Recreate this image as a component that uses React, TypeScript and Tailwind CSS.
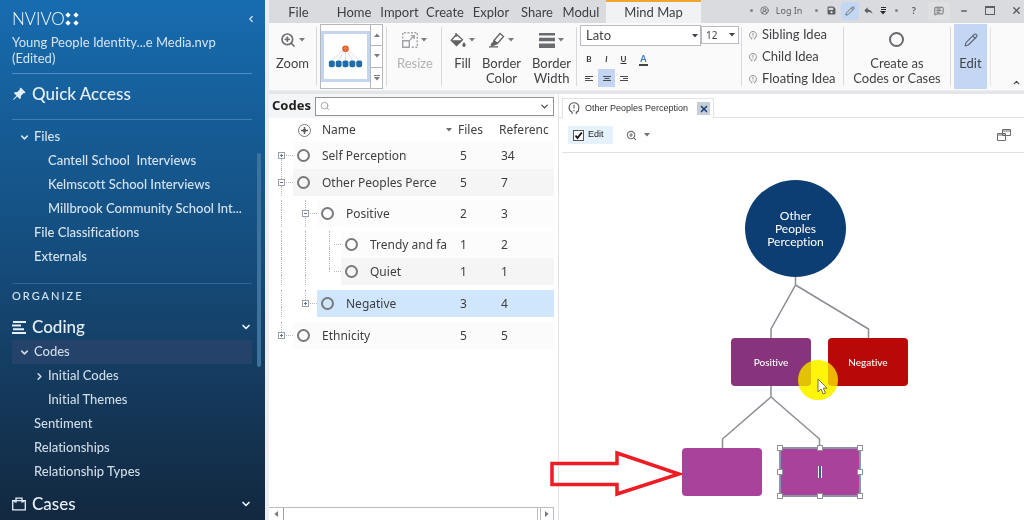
import React from "react";
import { ChevronDown, ChevronLeft, ChevronRight, ChevronUp, CircleUserRound, MessageSquareText, Minus, Pencil, X, ZoomIn, Search } from "lucide-react";
import { BsFillPinAngleFill } from "react-icons/bs";
import { FaSave } from "react-icons/fa";
import { MdReply } from "react-icons/md";

function Caret({ className = "" }: { className?: string }) {
  return (
    <svg viewBox="0 0 6 4" className={`h-[4px] w-[6px] shrink-0 fill-current ${className}`} aria-hidden="true">
      <path d="M0 0h6L3 3.6z" />
    </svg>
  );
}

/* ---------- Sidebar ---------- */

function NavRow({ label, level = 0, arrow, active }: { label: string; level?: number; arrow?: "down" | "right"; active?: boolean }) {
  return (
    <li className={`flex h-6 items-center whitespace-pre ${level ? "pl-[22px]" : "pl-[7px]"} ${active ? "bg-[#24426a]" : ""}`}>
      <a href="#" className="flex items-center">
        <span className={`flex justify-start ${level ? "w-[14px]" : "w-[15px]"}`}>
          {arrow === "down" && <ChevronDown size={11} strokeWidth={3.5} />}
          {arrow === "right" && <ChevronRight size={11} strokeWidth={3.5} />}
        </span>
        {label}
      </a>
    </li>
  );
}

function Sidebar() {
  return (
    <aside className="relative flex w-[265px] shrink-0 flex-col bg-linear-to-b from-[#176cb0] via-[#144c7b] to-[#12283f] pr-[13px] pl-3 font-['Lato',sans-serif] text-[13px] text-[#d5e3f0]">
      <header className="flex h-[74px] flex-col border-b border-[#4b8ec5] pt-[11px]">
        <div className="flex h-4 items-center justify-between">
          <span className="flex items-center">
            <span className="text-[17px] leading-4 font-light text-white">NVIVO</span>
            <svg viewBox="0 0 14 14" className="h-[14px] w-[14px] fill-white" aria-hidden="true">
              <path d="M3 0l1 2 2 1-2 1-1 2-1-2-2-1 2-1zM11 0l1 2 2 1-2 1-1 2-1-2-2-1 2-1zM3 8l1 2 2 1-2 1-1 2-1-2-2-1 2-1zM11 8l1 2 2 1-2 1-1 2-1-2-2-1 2-1z" />
              <path d="M1.500 1.500h3v3h-3zM9.500 1.500h3v3h-3zM1.500 9.500h3v3h-3zM9.500 9.500h3v3h-3z" />
            </svg>
          </span>
          <button aria-label="Collapse navigation" className="-mr-1"><ChevronLeft size={10} strokeWidth={3} /></button>
        </div>
        <p className="mt-[7px] leading-4">Young People Identity...e Media.nvp<br />(Edited)</p>
      </header>
      <h2 className="flex h-[46px] items-center gap-1.5 border-b border-[#3f7eb1] pb-1.5 text-[17px] font-medium text-[#e6eff7]">
        <BsFillPinAngleFill size={14} />Quick Access
      </h2>
      <ul className="mt-[5px] pb-[14px] font-medium [font-variant-ligatures:none]">
        <NavRow label="Files" arrow="down" />
        <NavRow label="Cantell School  Interviews" level={1} />
        <NavRow label="Kelmscott School Interviews" level={1} />
        <NavRow label="Millbrook Community School Int..." level={1} />
        <NavRow label="File Classifications" />
        <NavRow label="Externals" />
      </ul>
      <h3 className="border-t border-[#2c6597] pt-[5px] text-[11px] leading-[14px] font-medium tracking-[0.18em]">ORGANIZE</h3>
      <h2 className="mt-3 flex h-6 items-center justify-between pr-px text-[17px] font-medium text-[#e6eff7]">
        <span className="flex items-center gap-1.5">
          <svg viewBox="0 0 14 14" className="h-[14px] w-[14px] fill-current" aria-hidden="true">
            <path d="M1 1h13v2H1zM0 4.6h9v2H0zM1 8.2h11v2H1zM0 12h14v2H0z" />
          </svg>
          Coding
        </span>
        <ChevronDown size={12} strokeWidth={3.500} className="-mr-px" />
      </h2>
      <ul className="mt-px font-medium text-[#cfdbe6] [font-variant-ligatures:none]">
        <NavRow label="Codes" arrow="down" active />
        <NavRow label="Initial Codes" level={1} arrow="right" />
        <NavRow label="Initial Themes" level={1} />
        <NavRow label="Sentiment" />
        <NavRow label="Relationships" />
        <NavRow label="Relationship Types" />
      </ul>
      <h2 className="mt-2 flex h-6 items-center justify-between pr-px text-[17px] font-medium text-[#e6eff7]">
        <span className="flex items-center gap-1.5">
          <svg viewBox="0 0 14 14" className="h-[14px] w-[14px] fill-none stroke-current" strokeWidth="1.3" aria-hidden="true">
            <path d="M.7 3.7h12.6v9.2H.7zM4 5.8V1.2h6v4.6M2.500 3.7v1.6M11.500 3.7v1.6" />
          </svg>
          Cases
        </span>
        <ChevronDown size={12} strokeWidth={3.500} className="-mr-px" />
      </h2>
      <span className="absolute top-[153px] right-1 h-[214px] w-1 rounded bg-[#3d729d]" />
    </aside>
  );
}

/* ---------- Window and ribbon ---------- */

const tabs = [
  { label: "File", width: "w-[59px]" },
  { label: "Home", width: "ml-[3px] w-[46px]" },
  { label: "Import", width: "w-[45px]" },
  { label: "Create", width: "w-[46px]" },
  { label: "Explor", width: "w-[46px]" },
  { label: "Share", width: "w-[46px]" },
  { label: "Modul", width: "w-[42px]" },
];

function Dot() {
  return <span className="block h-[3px] w-[3px] shrink-0 rounded-full bg-[#808489]" />;
}

function TabBar() {
  return (
    <nav className="flex h-[23px] shrink-0 items-stretch bg-[#d9dbde] font-['Lato',sans-serif] text-[13px] text-[#3c3f42]">
      {tabs.map((t) => (
        <button key={t.label} className={`pt-0.5 ${t.width}`}>{t.label}</button>
      ))}
      <button className="ml-[4px] w-[95px] border-t-2 border-[#efa62e] bg-[#f1f2f4]">Mind Map</button>
      <div className="flex flex-1 items-center justify-end pb-0.5 text-[10px] text-[#5b5e62]">
        <Dot />
        <button className="ml-[7px] flex items-center gap-[7px] font-['Noto_Sans',sans-serif] text-[9px]">
          <CircleUserRound size={9} />Log In
        </button>
        <span className="ml-[13px]"><Dot /></span>
        <button aria-label="Save" className="ml-[9px]"><FaSave size={9} /></button>
        <button aria-label="Edit mode" className="ml-[5px] flex h-[18px] w-[18px] items-center justify-center rounded-sm bg-[#c3d7f3]"><Pencil size={10} /></button>
        <button aria-label="Undo" className="ml-[4px]"><MdReply size={11} /></button>
        <button aria-label="Customize" className="ml-[6px] flex w-[6px] flex-col items-center gap-px text-[#2a2a2a]">
          <span className="h-px w-[5px] bg-current" /><span className="h-px w-[5px] bg-current" /><Caret />
        </button>
        <span className="ml-[9px]"><Dot /></span>
        <button aria-label="Help" className="ml-[13px] font-bold">?</button>
        <button aria-label="Feedback" className="ml-[12px] flex h-[18px] w-[22px] items-center justify-center rounded-sm bg-[#dfe0e2]"><MessageSquareText size={10} /></button>
        <button aria-label="Minimize" className="ml-[10px]"><Minus size={8} strokeWidth={4} /></button>
        <button aria-label="Maximize" className="ml-[17px] h-[9px] w-[10px] border border-t-2 border-[#5b5e62]" />
        <button aria-label="Close" className="mr-0.5 ml-[16px]"><X size={11} strokeWidth={3} /></button>
      </div>
    </nav>
  );
}

function Group({ width, children, last }: { width: string; children: React.ReactNode; last?: boolean }) {
  return (
    <div className={`flex shrink-0 ${width}`}>
      <div className="flex min-w-0 flex-1 justify-center">{children}</div>
      <span className={`my-1 w-px ${last ? "bg-[#e2e4e8]" : "bg-[#d6d9de]"}`} />
    </div>
  );
}

function BigButton({ icon, lines, caret = true, className = "" }: { icon: React.ReactNode; lines: string[]; caret?: boolean; className?: string }) {
  return (
    <button className={`flex flex-col items-center ${className}`}>
      <span className="flex h-[33px] items-center gap-[3px]">{icon}{caret && <Caret className="text-[#77797c]" />}</span>
      {lines.map((l) => (<span key={l} className="leading-[15px]">{l}</span>))}
    </button>
  );
}

function HeadIcon() {
  return (
    <svg viewBox="0 0 12 14" className="h-[9px] w-2 fill-none stroke-[#77797c]" strokeWidth="1.3" aria-hidden="true">
      <path d="M4 13v-2C1.500 10 .7 8 .7 6 .7 3 3 .8 6 .8S11.300 3 11.300 5.500L10.500 10 8.500 11v2M6 3v4M6 8.500V10" />
    </svg>
  );
}

function AlignIcon({ kind }: { kind: "left" | "center" | "right" }) {
  const d = { left: "M0 .5h8M0 2.500h5M0 4.500h8", center: "M0 .5h8M1.500 2.500h5M0 4.500h8", right: "M0 .5h8M3 2.500h5M0 4.500h8" }[kind];
  return <svg viewBox="0 0 8 5" className="h-[5px] w-2 fill-none stroke-current" strokeWidth="1" aria-hidden="true"><path d={d} /></svg>;
}

function Ribbon() {
  return (
    <section className="flex h-[68px] shrink-0 items-stretch border-b border-[#eceef0] bg-[#fafafb] font-['Lato',sans-serif] text-[13px] text-[#404245]">
      <Group width="w-12">
        <BigButton lines={["Zoom"]} icon={<ZoomIn size={16} strokeWidth={2.500} className="text-[#6d6f72]" />} />
      </Group>
      <Group width="w-[70px]">
        <div className="my-px flex w-[63px] border border-[#b5b7ba] bg-white">
          <button aria-label="Mind map style" className="my-[6px] flex-1 border-[3px] border-[#c4d5f0]">
            <svg viewBox="0 0 44 44" className="h-full w-full" aria-hidden="true">
              <path d="M22 13L8 26M22 13l-7 13M22 13v13M22 13l7 13M22 13l14 13" stroke="#dcdee0" fill="none" />
              <circle cx="22" cy="14" r="2.600" fill="#f6b04b" stroke="#e8582b" strokeWidth="1.500" />
              <path d="M20.500 12.500l3 3m0-3l-3 3" stroke="#d9482b" />
              <g fill="#1f6ca8">
                <rect x="5" y="26" width="6" height="7" rx="2" /><rect x="12" y="26" width="6" height="7" rx="2" /><rect x="19" y="26" width="6" height="7" rx="2" /><rect x="26" y="26" width="6" height="7" rx="2" /><rect x="33" y="26" width="6" height="7" rx="2" />
              </g>
            </svg>
          </button>
          <div className="flex w-3 flex-col divide-y divide-[#b5b7ba] border-l border-[#b5b7ba] text-[#77797c]">
            <button aria-label="Previous style" className="flex flex-1 items-center justify-center"><Caret className="rotate-180" /></button>
            <button aria-label="Next style" className="flex flex-1 items-center justify-center"><Caret /></button>
            <button aria-label="More styles" className="flex flex-1 flex-col items-center justify-center gap-px"><span className="h-px w-[6px] bg-current" /><Caret /></button>
          </div>
        </div>
      </Group>
      <Group width="w-[55px]">
        <BigButton
          lines={["Resize"]}
          className="pl-0.5 text-[#b0b2b5]"
          icon={
            <svg viewBox="0 0 16 16" className="h-4 w-4 fill-none stroke-[#a0a2a5]" aria-hidden="true">
              <path d="M.7 8.700h6.600v6.600H.7z" strokeWidth="1.400" />
              <path d="M.7 6.500V.7h14.600v14.600H9.500" strokeWidth="1.400" strokeDasharray="2 1.500" />
              <path d="M8 8l4-4M9 3.700h3.300V7" strokeWidth="1.300" />
            </svg>
          }
        />
      </Group>
      <Group width="w-[135px]">
        <div className="flex flex-1 gap-[11px] pl-2">
          <BigButton
            lines={["Fill"]}
            icon={
              <svg viewBox="0 0 16 16" className="h-4 w-4 fill-[#606265]" aria-hidden="true">
                <path d="M6 1v4" stroke="#606265" strokeWidth="1.400" />
                <path d="M6.500 2.500L1.200 8.300l5.300 5.300 6-5.800z" fill="none" stroke="#606265" strokeWidth="1.300" />
                <path d="M1.200 8.300h11l-5.700 5.300zM14 10c1 1.500 1.700 2.400 1.700 3.300a1.700 1.700 0 01-3.400 0c0-.9.700-1.800 1.700-3.300z" />
              </svg>
            }
          />
          <BigButton
            lines={["Border", "Color"]}
            className="-ml-1"
            icon={
              <svg viewBox="0 0 16 16" className="h-4 w-4 fill-none stroke-[#606265]" strokeWidth="1.300" aria-hidden="true">
                <path d="M5 8.500L11 1.500l3.500 3-6 7-3.800.8zM5 8.500l3.500 3M3.500 10.500L2 13.500M0 14.800h9" />
                <path d="M5 9l3 2.500L3 14z" fill="#606265" />
              </svg>
            }
          />
          <BigButton
            lines={["Border", "Width"]}
            icon={
              <svg viewBox="0 0 16 16" className="h-4 w-4 fill-[#6a6c6f]" aria-hidden="true">
                <path d="M0 1h16v2.500H0zM0 5.700h16v3.500H0zM0 11.500h16v4.500H0z" />
              </svg>
            }
          />
        </div>
      </Group>
      <Group width="w-[165px]">
        <div className="flex flex-1 flex-col pt-0.5 pl-[3px]">
          <div className="flex items-start">
            <div className="flex h-[21px] w-[121px] items-center border border-[#b9bbbe] bg-white pr-[2px]">
              <select aria-label="Font" className="h-full min-w-0 flex-1 appearance-none bg-transparent pl-[5px] outline-none"><option>Lato</option></select>
              <Caret className="w-[5px]" />
            </div>
            <div className="mt-px flex h-[18px] w-[38px] items-center border border-[#b9bbbe] bg-white pr-[3px] font-['Noto_Sans',sans-serif] text-[10px]">
              <select aria-label="Font size" className="h-full min-w-0 flex-1 appearance-none bg-transparent pl-1 outline-none"><option>12</option></select>
              <Caret className="w-[5px]" />
            </div>
          </div>
          <div className="mt-1 flex h-[18px] items-center text-[8px] font-bold text-[#333]">
            <button className="w-[18px]">B</button>
            <button className="w-[17px] italic">I</button>
            <button className="w-[17px] underline">U</button>
            <button aria-label="Font color" className="ml-[3px] w-[17px]"><span className="border-b-2 border-[#444] px-px text-[9px] leading-2 text-[#3976bd]">A</span></button>
          </div>
          <div className="mt-px flex h-[18px] items-stretch text-[#4a4c4f]">
            <button aria-label="Align left" className="flex w-[18px] items-center justify-center"><AlignIcon kind="left" /></button>
            <button aria-label="Align center" className="flex w-[17px] items-center justify-center bg-[#c3d5f2]"><AlignIcon kind="center" /></button>
            <button aria-label="Align right" className="flex w-[17px] items-center justify-center"><AlignIcon kind="right" /></button>
          </div>
        </div>
      </Group>
      <Group width="w-[102px]">
        <div className="flex flex-1 flex-col pt-px pl-[7px]">
          {["Sibling Idea", "Child Idea", "Floating Idea"].map((l) => (
            <button key={l} className="flex h-[22px] items-center gap-[5px] whitespace-nowrap"><HeadIcon />{l}</button>
          ))}
        </div>
      </Group>
      <Group width="w-[107px]">
        <BigButton caret={false} lines={["Create as", "Codes or Cases"]} icon={<span className="h-[15px] w-[15px] rounded-full border-2 border-[#68696c]" />} />
      </Group>
      <Group width="w-10" last>
        <div className="flex flex-1 items-stretch justify-center py-px">
          <button className="flex w-[33px] flex-col items-center bg-[#c4d6f3]">
            <span className="flex h-8 items-center text-[#606a7a]"><Pencil size={14} strokeWidth={2} /></span>
            <span className="leading-[15px]">Edit</span>
          </button>
        </div>
      </Group>
      <div className="flex flex-1 items-end justify-end pr-[3px] pb-[3px]">
        <button aria-label="Collapse ribbon"><ChevronUp size={9} strokeWidth={3} /></button>
      </div>
    </section>
  );
}

/* ---------- Codes list ---------- */

type Guide = "line" | "elbow" | "last" | "plusTop" | "minus" | "plusEnd";
type Code = { name: string; files: number; refs: number; guides: Guide[]; gap: string; tone: string };

const codes: Code[] = [
  { name: "Self Perception", files: 5, refs: 34, guides: ["plusTop"], gap: "pt-0", tone: "bg-[#fbfbfb]" },
  { name: "Other Peoples Perce", files: 5, refs: 7, guides: ["minus"], gap: "pt-0", tone: "bg-[#f5f5f5]" },
  { name: "Positive", files: 2, refs: 3, guides: ["line", "minus"], gap: "pt-1", tone: "bg-[#fcfcfc]" },
  { name: "Trendy and fa", files: 1, refs: 2, guides: ["line", "line", "elbow"], gap: "pt-1", tone: "bg-[#fcfcfc]" },
  { name: "Quiet", files: 1, refs: 1, guides: ["line", "line", "last"], gap: "pt-0", tone: "bg-[#f5f5f5]" },
  { name: "Negative", files: 3, refs: 4, guides: ["line", "plusEnd"], gap: "pt-[5px]", tone: "bg-[#cfe6fd]" },
  { name: "Ethnicity", files: 5, refs: 5, guides: ["plusEnd"], gap: "pt-[5px]", tone: "bg-[#fbfbfb]" },
];

function GuideCell({ kind, gap }: { kind: Guide; gap: string }) {
  const box = kind === "plusTop" || kind === "plusEnd" || kind === "minus";
  const top = kind !== "plusTop";
  const bottom = kind !== "plusEnd" && kind !== "last";
  const dotted = "border-dotted border-[#b4b8bd]";
  return (
    <span className={`flex w-6 shrink-0 flex-col items-center ${gap}`}>
      <span className={`h-[10px] w-px ${top ? `border-l ${dotted}` : ""}`} />
      <span className="flex h-[7px] w-6 items-center">
        <span className="w-[9px]" />
        {box ? (
          <button aria-label={kind === "minus" ? "Collapse" : "Expand"} className="flex h-[7px] w-[7px] items-center justify-center border border-[#9aa0aa] bg-white">
            <svg viewBox="0 0 5 5" className="h-[5px] w-[5px] stroke-[#5872a0]" aria-hidden="true"><path d={kind === "minus" ? "M1 2.500h3" : "M1 2.500h3M2.500 1v3"} /></svg>
          </button>
        ) : (
          <span className="flex h-[7px] w-[7px] justify-center">
            <span className={`w-px border-l ${dotted} ${kind === "last" ? "h-[4px]" : "h-[7px]"}`} />
          </span>
        )}
        {kind !== "line" && <span className={`ml-px flex-1 border-t ${dotted}`} />}
      </span>
      <span className={`h-[10px] w-px ${bottom ? `border-l ${dotted}` : ""}`} />
    </span>
  );
}

function CodesPanel() {
  return (
    <section className="flex w-[290px] shrink-0 flex-col border-r border-[#dfe2e6] pr-1 font-['Noto_Sans',sans-serif] text-xs text-[#3c3e40]">
      <div className="flex h-6 items-center gap-1 bg-[#f4f5f6] pl-[3px]">
        <label htmlFor="code-search" className="w-[39px] text-[13px] font-bold text-[#222]">Codes</label>
        <div className="flex h-[19px] flex-1 items-center border border-[#919395] bg-white pr-[3px] pl-1">
          <Search size={10} className="text-[#999]" />
          <input id="code-search" className="h-full min-w-0 flex-1 bg-transparent px-1 outline-none" />
          <ChevronDown size={11} strokeWidth={2.500} />
        </div>
      </div>
      <table className="w-full table-fixed border-separate border-spacing-0 text-left">
        <thead>
          <tr className="h-6">
            <th className="w-[189px] p-0 font-normal">
              <div className="flex items-center">
                <span className="ml-[29px] flex h-[13px] w-[13px] items-center justify-center rounded-full border border-[#77797c]">
                  <svg viewBox="0 0 7 7" className="h-[7px] w-[7px]" aria-hidden="true"><path d="M0 3.500h7M3.500 0v7" stroke="#5c5e61" strokeWidth="1.500" /><circle cx="3.500" cy="3.500" r="1.800" fill="#5c5e61" /></svg>
                </span>
                <span className="ml-[11px] flex-1">Name</span>
                <Caret className="mr-1.5 w-2 text-[#6a6c6f]" />
              </div>
            </th>
            <th className="w-[41px] p-0 font-normal">Files</th>
            <th className="p-0 font-normal">Referenc</th>
          </tr>
        </thead>
        <tbody>
          {codes.map((c) => (
            <tr key={c.name}>
              <td className="p-0">
                <div className="flex">
                  {c.guides.map((g, i) => (<GuideCell key={i} kind={g} gap={c.gap} />))}
                  <div className={`flex min-w-0 flex-1 ${c.gap}`}>
                    <div className={`flex h-[27px] min-w-0 flex-1 items-center overflow-hidden whitespace-nowrap ${c.tone}`}>
                      <span className="mr-3 ml-1 h-[13px] w-[13px] shrink-0 rounded-full border-2 border-[#77797c]" />
                      {c.name}
                    </div>
                  </div>
                </div>
              </td>
              <td className={`p-0 ${c.gap}`}><div className={`flex h-[27px] items-center pl-0.5 ${c.tone}`}>{c.files}</div></td>
              <td className={`p-0 ${c.gap}`}><div className={`flex h-[27px] items-center pl-0.5 ${c.tone}`}>{c.refs}</div></td>
            </tr>
          ))}
        </tbody>
      </table>
      <div className="mt-auto flex h-[13px] items-stretch border-t border-[#b9bbbe] text-[#77797c]">
        <button aria-label="Scroll left" className="flex w-[15px] items-center justify-center border-r border-[#9d9fa2]"><Caret className="rotate-90" /></button>
        <span className="flex-1 border-r border-[#b9bbbe]" />
        <button aria-label="Scroll right" className="ml-0.5 flex w-[14px] items-center justify-center border-x border-[#b9bbbe]"><Caret className="-rotate-90" /></button>
      </div>
    </section>
  );
}

/* ---------- Mind map ---------- */

const handles = [
  "-top-[4px] -left-[4px]", "-top-[4px] left-[36px]", "-top-[4px] -right-[4px]",
  "top-[20px] -left-[4px]", "top-[20px] -right-[4px]",
  "-bottom-[4px] -left-[4px]", "-bottom-[4px] left-[36px]", "-bottom-[4px] -right-[4px]",
];

function Canvas() {
  const node = "absolute flex h-[48px] w-20 items-center justify-center rounded-[4px] text-[10px] font-medium text-white [font-variant-ligatures:none]";
  return (
    <div className="relative flex-1 font-['Lato',sans-serif]">
      <svg className="absolute top-0 left-0 h-[367px] w-[465px] fill-none stroke-[#8a8e92]" strokeWidth="1.500" viewBox="0 0 465 367" aria-hidden="true">
        <path d="M236.500 122v10L212 176v10M236.500 132l73 44v10M212 232v12L163.500 286v9M212 244l48.500 42v9" />
      </svg>
      <div className="absolute top-[27px] left-[186px] flex h-[97px] w-[101px] items-center justify-center rounded-[50%] bg-[#0d3e73] text-center text-xs leading-[13px] text-white [font-variant-ligatures:none]">
        Other<br />Peoples<br />Perception
      </div>
      <div className={`${node} top-[185px] left-[172px] bg-[#87347c]`}>Positive</div>
      <div className={`${node} top-[185px] left-[269px] bg-[#b90808]`}>Negative</div>
      <div className={`${node} top-[295px] left-[123px] bg-[#a9429a]`} />
      <div className={`${node} top-[295px] left-[221px] bg-[#a9429a]`}><span className="h-3 w-1 border-x border-[#f1f4ff] bg-[#35617a]" /></div>
      <div className="absolute top-[294px] left-[220px] h-[50px] w-[82px] border-2 border-[#8c93a8]">
        {handles.map((h) => (<span key={h} className={`absolute h-[6px] w-[6px] border border-[#8f9194] bg-white ${h}`} />))}
      </div>
      <svg viewBox="0 0 40 40" className="absolute top-[207px] left-[239px] h-10 w-10" aria-hidden="true">
        <circle cx="20" cy="20" r="20" fill="#ffff2e" className="mix-blend-multiply" />
        <circle cx="20" cy="20" r="20" fill="#fff200" fillOpacity=".75" />
        <path d="M20 19v13l3-3 2.200 5 2.300-1-2.200-4.800H29z" fill="#fff" stroke="#77703a" />
      </svg>
      <svg viewBox="0 0 134 48" className="absolute top-[297px] -left-[10px] h-12 w-[134px] fill-none stroke-[#ee1c25]" strokeWidth="3.500" aria-hidden="true">
        <path d="M3 13.500h65V3l62 21-62 20V34.500H3z" />
      </svg>
    </div>
  );
}

function MapPanel() {
  return (
    <section className="flex min-w-0 flex-1 flex-col">
      <div className="flex h-6 items-end border-b border-[#dfe1e4] pl-[3px] font-['Liberation_Sans',sans-serif] text-[9px] text-[#333]">
        <div className="-mb-px flex h-[20px] items-center border border-b-0 border-[#dfe1e4] bg-white pr-[3px] pl-[5px]">
          <svg viewBox="0 0 12 14" className="h-[13px] w-3 fill-none stroke-[#55585b]" strokeWidth="1.200" aria-hidden="true">
            <path d="M4 13v-2C1.500 10 .7 8 .7 6 .7 3 3 .8 6 .8S11.300 3 11.300 5.500L10.500 10 8.500 11v2M6 3v4M6 8.500V10" />
          </svg>
          <span className="mr-[9px] ml-[5px] whitespace-nowrap">Other Peoples Perception</span>
          <button aria-label="Close tab" className="flex h-[13px] w-[13px] items-center justify-center bg-[#c9ced6] text-[#21457e]"><X size={10} strokeWidth={4} /></button>
        </div>
      </div>
      <div className="ml-[3px] flex h-[35px] items-center border-b border-[#dfe1e4] pr-[13px] pl-[6px] font-['Liberation_Sans',sans-serif] text-[9px] text-[#222]">
        <label className="flex h-[18px] w-[45px] items-center gap-1 bg-[#e5f1fc] pl-[5px]">
          <span className="grid h-[11px] w-[11px] place-items-center">
            <input type="checkbox" defaultChecked className="col-start-1 row-start-1 h-[11px] w-[11px] appearance-none border border-[#555] bg-white" />
            <svg viewBox="0 0 9 9" className="pointer-events-none col-start-1 row-start-1 h-[9px] w-[9px] fill-none stroke-[#111]" strokeWidth="1.800" aria-hidden="true"><path d="M1.500 4.500l2 2.500L7.800 1.500" /></svg>
          </span>
          Edit
        </label>
        <button aria-label="Zoom map" className="ml-[13px] flex items-center gap-[7px] text-[#707275]"><ZoomIn size={11} strokeWidth={2.500} /><Caret /></button>
        <button aria-label="Undock" className="ml-auto">
          <svg viewBox="0 0 14 12" className="h-3 w-[14px] fill-white stroke-[#6b6d70]" aria-hidden="true">
            <path d="M5.500.5h8v6h-8zM5.500 2h8M.5 4.500h8v7h-8zM.5 6h8" />
          </svg>
        </button>
      </div>
      <Canvas />
    </section>
  );
}

export default function App() {
  return (
    <div className="flex min-h-screen bg-white">
      <Sidebar />
      <main className="flex min-w-0 flex-1 flex-col border-l-4 border-[#eceef1]">
        <TabBar />
        <Ribbon />
        <div className="h-[3px] shrink-0 bg-[#e3e5e8]" />
        <div className="flex flex-1 items-stretch">
          <CodesPanel />
          <MapPanel />
        </div>
      </main>
    </div>
  );
}
